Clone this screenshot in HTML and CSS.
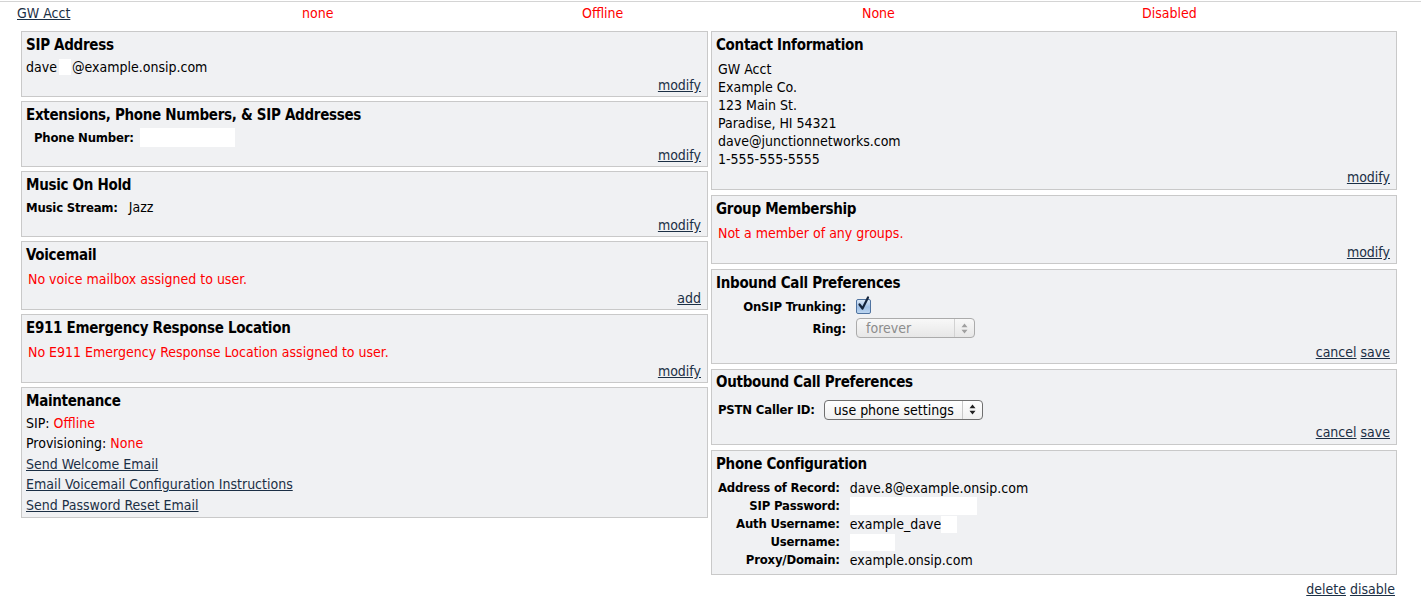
FILE: index.html
```html
<!DOCTYPE html>
<html>
<head>
<meta charset="utf-8">
<title>User</title>
<link rel="stylesheet" href="styles.css">
</head>
<body>
<div class="page">
  <div class="summary">
    <div class="sum-cell"><a href="#">GW Acct</a></div>
    <div class="sum-cell red">none</div>
    <div class="sum-cell red">Offline</div>
    <div class="sum-cell red">None</div>
    <div class="sum-cell red">Disabled</div>
  </div>
  <div class="columns">
    <div class="col col-left">
      <div class="panel">
        <h3>SIP Address</h3>
        <div class="line">dave<span class="redact r-sip"></span>@example.onsip.com</div>
        <div class="actions"><a href="#">modify</a></div>
      </div>
      <div class="panel">
        <h3>Extensions, Phone Numbers, &amp; SIP Addresses</h3>
        <div class="line indent"><b>Phone Number:</b><span class="redact r-phone"></span></div>
        <div class="actions"><a href="#">modify</a></div>
      </div>
      <div class="panel">
        <h3>Music On Hold</h3>
        <div class="line"><b>Music Stream:</b><span class="val">Jazz</span></div>
        <div class="actions"><a href="#">modify</a></div>
      </div>
      <div class="panel">
        <h3>Voicemail</h3>
        <div class="line msg red">No voice mailbox assigned to user.</div>
        <div class="actions"><a href="#">add</a></div>
      </div>
      <div class="panel">
        <h3>E911 Emergency Response Location</h3>
        <div class="line msg red">No E911 Emergency Response Location assigned to user.</div>
        <div class="actions"><a href="#">modify</a></div>
      </div>
      <div class="panel maint">
        <h3>Maintenance</h3>
        <div class="mline">SIP: <span class="red">Offline</span></div>
        <div class="mline">Provisioning: <span class="red">None</span></div>
        <div class="mline"><a href="#">Send Welcome Email</a></div>
        <div class="mline"><a href="#">Email Voicemail Configuration Instructions</a></div>
        <div class="mline"><a href="#">Send Password Reset Email</a></div>
      </div>
    </div>
    <div class="col col-right">
      <div class="panel contact-panel">
        <h3>Contact Information</h3>
        <div class="contact">
          <div>GW Acct</div>
          <div>Example Co.</div>
          <div>123 Main St.</div>
          <div>Paradise, HI 54321</div>
          <div>dave@junctionnetworks.com</div>
          <div>1-555-555-5555</div>
        </div>
        <div class="actions"><a href="#">modify</a></div>
      </div>
      <div class="panel">
        <h3>Group Membership</h3>
        <div class="line msg red">Not a member of any groups.</div>
        <div class="actions"><a href="#">modify</a></div>
      </div>
      <div class="panel">
        <h3>Inbound Call Preferences</h3>
        <div class="form-row inbound-row first">
          <b class="flabel">OnSIP Trunking:</b>
          <span class="checkbox"><svg width="15" height="16" viewBox="0 0 15 16"><path d="M3.5 8.5 L6.5 12.5 L12 1.5" fill="none" stroke="#14243c" stroke-width="2.2" stroke-linecap="round" stroke-linejoin="round"/></svg></span>
        </div>
        <div class="form-row inbound-row">
          <b class="flabel">Ring:</b>
          <span class="select disabled"><span class="sel-text">forever</span><span class="sel-arrows"><svg width="7" height="11" viewBox="0 0 7 11"><path d="M3.5 0.5 L6.5 4.2 H0.5Z M3.5 10.5 L6.5 6.8 H0.5Z" fill="#a0a0a0"/></svg></span></span>
        </div>
        <div class="actions form-actions"><a href="#">cancel</a> <a href="#">save</a></div>
      </div>
      <div class="panel outbound">
        <h3>Outbound Call Preferences</h3>
        <div class="form-row pstn-row">
          <b>PSTN Caller ID:</b>
          <span class="select"><span class="sel-text">use phone settings</span><span class="sel-arrows"><svg width="7" height="11" viewBox="0 0 7 11"><path d="M3.5 0.5 L6.5 4.2 H0.5Z M3.5 10.5 L6.5 6.8 H0.5Z" fill="#222"/></svg></span></span>
        </div>
        <div class="actions"><a href="#">cancel</a> <a href="#">save</a></div>
      </div>
      <div class="panel config-panel">
        <h3>Phone Configuration</h3>
        <div class="config">
          <b>Address of Record:</b><span>dave.8@example.onsip.com</span>
          <b>SIP Password:</b><span class="cell"><span class="redact r-pass"></span></span>
          <b>Auth Username:</b><span class="cell">example_dave<span class="redact r-auth"></span></span>
          <b>Username:</b><span class="cell"><span class="redact r-user"></span></span>
          <b>Proxy/Domain:</b><span>example.onsip.com</span>
        </div>
      </div>
      <div class="bottom-actions"><a href="#">delete</a> <a href="#">disable</a></div>
    </div>
  </div>
</div>
</body>
</html>
```

FILE: styles.css
```css
html, body {
  margin: 0;
  padding: 0;
  background: #ffffff;
}
body {
  font-family: "DejaVu Sans Condensed", "DejaVu Sans", sans-serif;
  font-size: 14px;
  color: #000;
}
.page {
  border-top: 1px solid #d4d4d4;
  margin-top: 1px;
}
a {
  color: #1b2f45;
  text-decoration: underline;
}
.red { color: #ff0000; }
b { font-size: 13px; font-weight: bold; letter-spacing: -0.2px; }

.summary {
  display: grid;
  grid-template-columns: 285px 280px 280px 280px 280px;
  padding: 2px 0 9px 17px;
  line-height: 18px;
}
.columns {
  display: flex;
  gap: 3px;
  padding-left: 21px;
  align-items: flex-start;
}
.col {
  display: flex;
  flex-direction: column;
  gap: 4px;
}
.col-left { width: 687px; }
.col-right { width: 686px; gap: 5px; }

.panel {
  background: #f0f1f3;
  border: 1px solid #c9c9c9;
  padding: 3px 6px 2px 4px;
}
.panel h3 {
  margin: 0;
  font-size: 15px;
  letter-spacing: -0.3px;
  font-weight: bold;
  line-height: 20px;
  padding-bottom: 3px;
}
.line {
  display: flex;
  align-items: center;
  height: 18px;
}
.indent { padding-left: 8px; }
.msg { padding-left: 2px; margin-top: 2px; }
.msg + .actions { margin-top: 1px; }
.val { margin-left: 11px; }
.redact {
  display: inline-block;
  background: #fff;
  flex: none;
}
.r-sip { width: 12px; height: 16px; margin: 0 1px 0 2px; }
.r-phone { width: 95px; height: 19px; margin-left: 6px; }
.r-pass { width: 127px; height: 18px; }
.r-auth { width: 16px; height: 17px; }
.r-user { width: 45px; height: 17px; }

.actions {
  text-align: right;
  line-height: 18px;
}
.maint h3 { padding-bottom: 2px; }
.mline { line-height: 20.4px; }

.contact-panel { padding-bottom: 3px; }
.contact {
  padding-left: 2px;
  padding-top: 2px;
  line-height: 18px;
}

.form-row {
  display: flex;
  align-items: center;
}
.inbound-row { height: 22px; }
.inbound-row.first { margin-top: -1px; }
.flabel {
  width: 130px;
  flex: none;
  text-align: right;
  margin-right: 10px;
}
.form-actions { margin-top: 4px; }
.checkbox {
  width: 13px;
  height: 13px;
  border: 1px solid #4f73a0;
  border-radius: 2px;
  background: linear-gradient(#dbe8f7, #9fc0e6 55%, #bcd5f0);
  position: relative;
}
.checkbox svg {
  position: absolute;
  left: -1px;
  top: -4px;
}
.select {
  display: inline-flex;
  align-items: stretch;
  height: 18px;
  border: 1px solid #6f6f6f;
  border-radius: 4px;
  background: linear-gradient(#ffffff, #f0f0f0);
  font-size: 14px;
}
.select .sel-text {
  padding: 0 8px 0 9px;
  line-height: 18px;
}
.select .sel-arrows {
  width: 19px;
  border-left: 1px solid #c9c9c9;
  display: flex;
  align-items: center;
  justify-content: center;
}
.select.disabled {
  border-color: #ababab;
  background: linear-gradient(#f8f8f8, #e7e7e7);
  color: #8c8c8c;
  width: 117px;
}
.select.disabled .sel-text { flex: 1; }
.select.disabled .sel-arrows { border-left-color: #d2d2d2; }

.outbound { padding-bottom: 3px; }
.outbound h3 { margin-top: -1px; padding-bottom: 4px; }
.pstn-row {
  padding-left: 2px;
  height: 25px;
  margin-top: 1px;
  gap: 9px;
}
.pstn-row + .actions { margin-top: 1px; }

.config-panel { padding-bottom: 5px; }
.config {
  display: grid;
  grid-template-columns: max-content auto;
  grid-auto-rows: 18px;
  column-gap: 10px;
  padding-left: 2px;
  padding-top: 2px;
  line-height: 18px;
  align-items: center;
}
.config b { text-align: right; white-space: nowrap; }
.config .cell { display: flex; align-items: center; height: 18px; }

.bottom-actions {
  text-align: right;
  padding-right: 2px;
  line-height: 18px;
}
```
